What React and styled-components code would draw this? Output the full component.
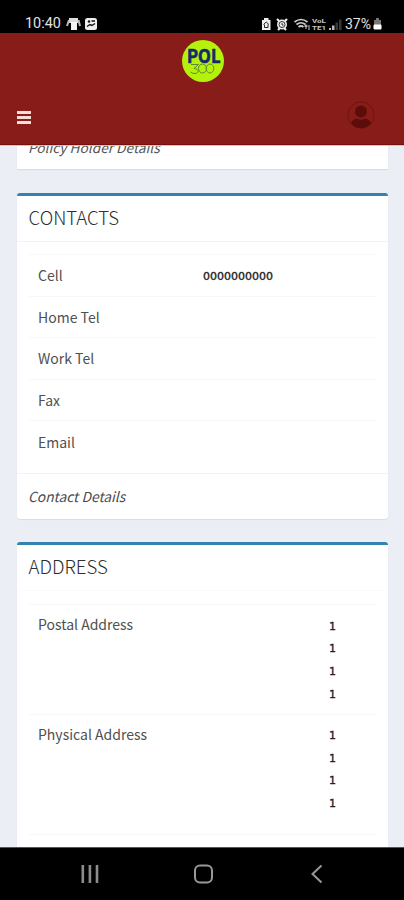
import React from "react";
import styled, { createGlobalStyle } from "styled-components";

const contacts = [
  { label: "Cell", value: "0000000000" },
  { label: "Home Tel", value: "" },
  { label: "Work Tel", value: "" },
  { label: "Fax", value: "" },
  { label: "Email", value: "" },
];

const addresses = [
  { label: "Postal Address", lines: ["1", "1", "1", "1"] },
  { label: "Physical Address", lines: ["1", "1", "1", "1"] },
];

const StatusBar = () => (
  <Status>
    <Clock>10:40</Clock>
    <svg width="33" height="16" viewBox="0 0 33 16">
      <path d="M3 2h9v5h-9z" fill="#ddd" />
      <path d="M5 6h6v8H5z" fill="#f4f4f4" />
      <path d="M3 4l-2 6M12.500 4l1.500 6" stroke="#bbb" strokeWidth="2" />
      <rect x="19" y="2" width="12" height="12" rx="2.500" fill="#eee" />
      <path d="M21 10.500l3-2 2 1 3-2" stroke="#111" strokeWidth="1.500" fill="none" />
      <circle cx="23" cy="5.500" r="1.200" fill="#111" />
      <path d="M25.500 5h3.500" stroke="#111" strokeWidth="1.500" />
    </svg>
    <StatusRight>
      <svg width="90" height="16" viewBox="0 0 90 16">
        <path d="M3 4h8.500v10H3zM5 2h4.500v2H5z" fill="#eee" />
        <path d="M4.500 8.500l2.700-2.500 2.700 2.500M5.500 8.500v3h3.500v-3" stroke="#222" fill="none" />
        <circle cx="23" cy="8.500" r="5" fill="#eee" />
        <path d="M18 3l2 2M28 3l-2 2M19 14l2-2M27 14l-2-2" stroke="#eee" strokeWidth="2.200" />
        <circle cx="23" cy="8.500" r="3" stroke="#333" fill="none" />
        <path d="M23 7v2h1.500" stroke="#333" fill="none" />
        <path
          d="M35.500 6q6.500-5 13 0M37.500 8.500q4.500-3.500 9 0M39.500 11q2.500-2 5 0"
          stroke="#ccc"
          strokeWidth="1.700"
          fill="none"
        />
        <path d="M47 13V9M45.500 10.500L47 9l1.500 1.500M50 9v5" stroke="#bbb" strokeWidth="1.100" fill="none" />
        <VolteText x="53" y="7.400" textLength="14" lengthAdjust="spacingAndGlyphs">
          VoL
        </VolteText>
        <VolteText x="53" y="14" textLength="14" lengthAdjust="spacingAndGlyphs">
          TE1
        </VolteText>
        <path d="M70 12h2v2h-2zM73 9.500h2.500V14H73z" fill="#bbb" />
        <path d="M76.500 6.500H79V14h-2.500zM80 3.500h2.500V14H80z" fill="#383838" />
      </svg>
      <Percent>37%</Percent>
      <svg width="9" height="14" viewBox="0 0 9 14">
        <path d="M3 1h3v2H3zM1 3h7v5H1z" fill="#777" />
        <rect x="0.500" y="7.500" width="8" height="5" rx="1" fill="#fff" />
      </svg>
    </StatusRight>
  </Status>
);

const Logo = () => (
  <svg width="44" height="44" viewBox="0 0 44 44">
    <circle cx="22" cy="22" r="21" fill="#b4f20c" />
    <text
      x="6"
      y="23.500"
      fontSize="18.500"
      fontWeight="700"
      fontFamily="'Noto Sans CJK SC', sans-serif"
      fill="#142a6e"
      stroke="#142a6e"
      strokeWidth="0.600"
      textLength="33.500"
      lengthAdjust="spacingAndGlyphs"
    >
      POL
    </text>
    <path
      d="M10 25.500h7.500l-4.500 4c5 0 5.500 5 1 5q-3 0-4.500-1.500"
      stroke="#5b8a35"
      strokeWidth="1"
      fill="none"
    />
    <ellipse cx="21.500" cy="29.500" rx="4" ry="4.500" stroke="#5b8a35" strokeWidth="1" fill="none" />
    <ellipse cx="29" cy="29.500" rx="3.800" ry="4.500" stroke="#5b8a35" strokeWidth="1" fill="none" />
  </svg>
);

const Header = () => (
  <Top>
    <LogoRow>
      <Logo />
    </LogoRow>
    <Toolbar>
      <MenuButton>
        <span />
        <span />
        <span />
      </MenuButton>
      <svg width="30" height="30" viewBox="0 0 30 30">
        <circle cx="15" cy="14" r="13.200" stroke="#6f1411" strokeWidth="1" fill="none" />
        <circle cx="15" cy="10.500" r="6" fill="#5c0d0b" />
        <path d="M5 22q2-4 6-4.500q4 2.500 8 0q4 0.500 6 4.500q-4 5.200-10 5.200T5 22z" fill="#5c0d0b" />
      </svg>
    </Toolbar>
  </Top>
);

const App = () => {
  return (
    <>
      <GlobalStyle />
      <Screen>
        <StatusBar />
        <Header />
        <Content>
          <ClippedCard>Policy Holder Details</ClippedCard>
          <Card>
            <Title>CONTACTS</Title>
            <ContactTable>
              {contacts.map(({ label, value }) => (
                <ContactRow key={label}>
                  <span>{label}</span>
                  <CellValue>{value}</CellValue>
                </ContactRow>
              ))}
            </ContactTable>
            <Footer>Contact Details</Footer>
          </Card>
          <Card>
            <Title $faint>ADDRESS</Title>
            <AddressTable>
              {addresses.map(({ label, lines }) => (
                <AddressRow key={label}>
                  <span>{label}</span>
                  <Lines>
                    {lines.map((line, i) => (
                      <Value key={i}>{line}</Value>
                    ))}
                  </Lines>
                </AddressRow>
              ))}
            </AddressTable>
          </Card>
        </Content>
        <NavBar>
          <svg width="20" height="20" viewBox="0 0 20 20">
            <path d="M2.800 1v18M9.900 1v18M17 1v18" stroke="#8c8c8c" strokeWidth="2.600" />
          </svg>
          <svg width="20" height="20" viewBox="0 0 20 20">
            <rect x="1" y="1.500" width="17" height="17" rx="5" stroke="#999" strokeWidth="2" fill="none" />
          </svg>
          <svg width="20" height="20" viewBox="0 0 20 20">
            <path d="M14.500 1.500L5.500 10l9 8.500" stroke="#999" strokeWidth="2" fill="none" />
          </svg>
        </NavBar>
      </Screen>
    </>
  );
};

export default App;

const GlobalStyle = createGlobalStyle`
  * {
    box-sizing: border-box;
  }
  body {
    margin: 0;
    background: #000;
    font-family: "Noto Sans CJK SC", "Noto Sans", sans-serif;
  }
  svg {
    display: block;
    flex: none;
  }
`;

const Screen = styled.div`
  width: 404px;
  height: 900px;
  display: flex;
  flex-direction: column;
  overflow: hidden;
`;

const Status = styled.div`
  flex: none;
  height: 33px;
  padding: 14px 22px 0 25px;
  display: flex;
  align-items: center;
  background: #000;
  color: #e2e2e2;
  font-family: Roboto, sans-serif;
`;

const Clock = styled.span`
  width: 41px;
  font-size: 14.4px;
  line-height: 18px;
`;

const StatusRight = styled.div`
  margin-left: auto;
  display: flex;
  align-items: center;
`;

const VolteText = styled.text`
  fill: #c4c4c4;
  font-size: 5.4px;
  font-weight: 700;
`;

const Percent = styled.span`
  width: 28px;
  margin-left: -4px;
  font-size: 14px;
  line-height: 18px;
`;

const Top = styled.header`
  flex: none;
  height: 112px;
  background: #871c18;
  border-bottom: 1px solid #770f0c;
`;

const LogoRow = styled.div`
  height: 56px;
  padding: 6px 0 0 181px;
`;

const Toolbar = styled.div`
  height: 54px;
  padding: 0 28px 0 17px;
  display: flex;
  align-items: center;
  justify-content: space-between;
`;

const MenuButton = styled.div`
  margin-top: 3px;
  width: 14px;
  display: grid;
  gap: 2px;
  span {
    height: 3px;
    background: #f5dcd6;
  }
`;

const Content = styled.main`
  flex: 1;
  min-height: 0;
  padding: 0 16px 0 17px;
  background: #ebeef5;
  border-top: 1px solid #e3bcbb;
  overflow: hidden;
`;

const ClippedCard = styled.div`
  height: 46px;
  margin: -23px 0 24px;
  padding: 13px 11px 0;
  background: #fff;
  color: #555;
  font-size: 13.7px;
  line-height: 22px;
  font-style: italic;
  box-shadow: 0 1px 1px rgba(0, 0, 0, 0.08);
`;

const Card = styled.section`
  margin-bottom: 23px;
  background: #fff;
  border-top: 3px solid #3383b0;
  border-radius: 3px;
  box-shadow: 0 1px 1px rgba(0, 0, 0, 0.08);
`;

const Title = styled.h3`
  height: 46px;
  margin: 0;
  padding: 0 11px 0 11.5px;
  border-bottom: 1px solid ${({ $faint }) => ($faint ? "#fbfbfb" : "#f3f3f3")};
  color: #2e2e2e;
  font-size: 18.6px;
  font-weight: 300;
  line-height: 41px;
`;

const ContactTable = styled.div`
  padding: 12px 11px 11.5px;
`;

const ContactRow = styled.div`
  height: 41.6px;
  padding: 0 9px 0 10px;
  border-top: 1px solid #f8f8f8;
  display: grid;
  grid-template-columns: 165px 1fr;
  align-items: center;
  color: #505050;
  font-size: 14px;
  line-height: 22px;
`;

const Value = styled.span`
  color: #222;
  font-family: "DejaVu Sans", sans-serif;
  font-size: 11px;
  line-height: 22.6px;
  -webkit-text-stroke: 0.35px #222;
`;

const CellValue = styled(Value)`
  padding-top: 4px;
`;

const Footer = styled.div`
  height: 46px;
  padding: 0 11px;
  border-top: 1px solid #f3f3f3;
  color: #4a4a4a;
  font-size: 13.8px;
  font-style: italic;
  line-height: 45px;
`;

const AddressTable = styled.div`
  padding: 13px 11px 20px;
`;

const AddressRow = styled.div`
  height: 109.3px;
  padding: 8px 9px 0 10px;
  border-top: 1px solid #f8f8f8;
  display: grid;
  grid-template-columns: 291px 1fr;
  align-content: start;
  color: #505050;
  font-size: 14px;
  line-height: 22px;
  &:last-child {
    height: 121px;
    border-bottom: 1px solid #f8f8f8;
  }
`;

const Lines = styled.div`
  padding-top: 2.4px;
  display: flex;
  flex-direction: column;
`;

const NavBar = styled.nav`
  flex: none;
  height: 53px;
  padding: 0 77px 0 80px;
  background: #000;
  border-top: 1px solid #555;
  display: flex;
  align-items: center;
  justify-content: space-between;
`;
